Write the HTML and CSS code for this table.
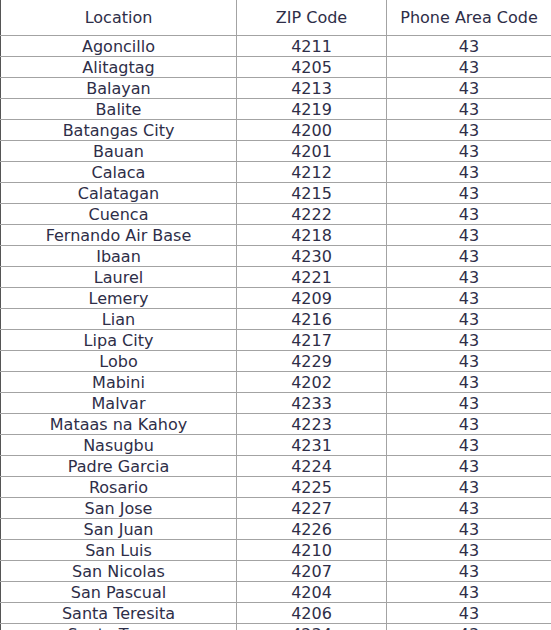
FILE: index.html
```html
<!DOCTYPE html>
<html>
<head>
<meta charset="utf-8">
<link rel="stylesheet" href="styles.css">
</head>
<body>
<table class="zip-table">
<colgroup><col class="c1"><col class="c2"><col class="c3"></colgroup>
<thead>
<tr><th>Location</th><th>ZIP Code</th><th>Phone Area Code</th></tr>
</thead>
<tbody>
<tr><td>Agoncillo</td><td>4211</td><td>43</td></tr>
<tr><td>Alitagtag</td><td>4205</td><td>43</td></tr>
<tr><td>Balayan</td><td>4213</td><td>43</td></tr>
<tr><td>Balite</td><td>4219</td><td>43</td></tr>
<tr><td>Batangas City</td><td>4200</td><td>43</td></tr>
<tr><td>Bauan</td><td>4201</td><td>43</td></tr>
<tr><td>Calaca</td><td>4212</td><td>43</td></tr>
<tr><td>Calatagan</td><td>4215</td><td>43</td></tr>
<tr><td>Cuenca</td><td>4222</td><td>43</td></tr>
<tr><td>Fernando Air Base</td><td>4218</td><td>43</td></tr>
<tr><td>Ibaan</td><td>4230</td><td>43</td></tr>
<tr><td>Laurel</td><td>4221</td><td>43</td></tr>
<tr><td>Lemery</td><td>4209</td><td>43</td></tr>
<tr><td>Lian</td><td>4216</td><td>43</td></tr>
<tr><td>Lipa City</td><td>4217</td><td>43</td></tr>
<tr><td>Lobo</td><td>4229</td><td>43</td></tr>
<tr><td>Mabini</td><td>4202</td><td>43</td></tr>
<tr><td>Malvar</td><td>4233</td><td>43</td></tr>
<tr><td>Mataas na Kahoy</td><td>4223</td><td>43</td></tr>
<tr><td>Nasugbu</td><td>4231</td><td>43</td></tr>
<tr><td>Padre Garcia</td><td>4224</td><td>43</td></tr>
<tr><td>Rosario</td><td>4225</td><td>43</td></tr>
<tr><td>San Jose</td><td>4227</td><td>43</td></tr>
<tr><td>San Juan</td><td>4226</td><td>43</td></tr>
<tr><td>San Luis</td><td>4210</td><td>43</td></tr>
<tr><td>San Nicolas</td><td>4207</td><td>43</td></tr>
<tr><td>San Pascual</td><td>4204</td><td>43</td></tr>
<tr><td>Santa Teresita</td><td>4206</td><td>43</td></tr>
<tr><td>Santo Tomas</td><td>4234</td><td>43</td></tr>
</tbody>
</table>
</body>
</html>
```

FILE: styles.css
```css
html, body {
  margin: 0;
  padding: 0;
  background: #ffffff;
}

.zip-table {
  border-collapse: collapse;
  table-layout: fixed;
  width: 551px;
  font-family: "DejaVu Sans", Verdana, sans-serif;
  font-size: 16px;
  color: #2e2e48;
}

.c1 { width: 236px; }
.c2 { width: 150px; }
.c3 { width: 165px; }

.zip-table th,
.zip-table td {
  text-align: center;
  padding: 1px 0 0 0;
  border: 1px solid #a3a3a3;
  line-height: 19px;
  height: 19px;
  white-space: nowrap;
  overflow: hidden;
}

.zip-table th {
  font-weight: normal;
  height: 35px;
  padding: 0;
  border-top: none;
}

.zip-table th:first-child,
.zip-table td:first-child {
  border-left: 1px solid #555555;
}

.zip-table th:last-child,
.zip-table td:last-child {
  border-right: 1px solid #555555;
}
```
